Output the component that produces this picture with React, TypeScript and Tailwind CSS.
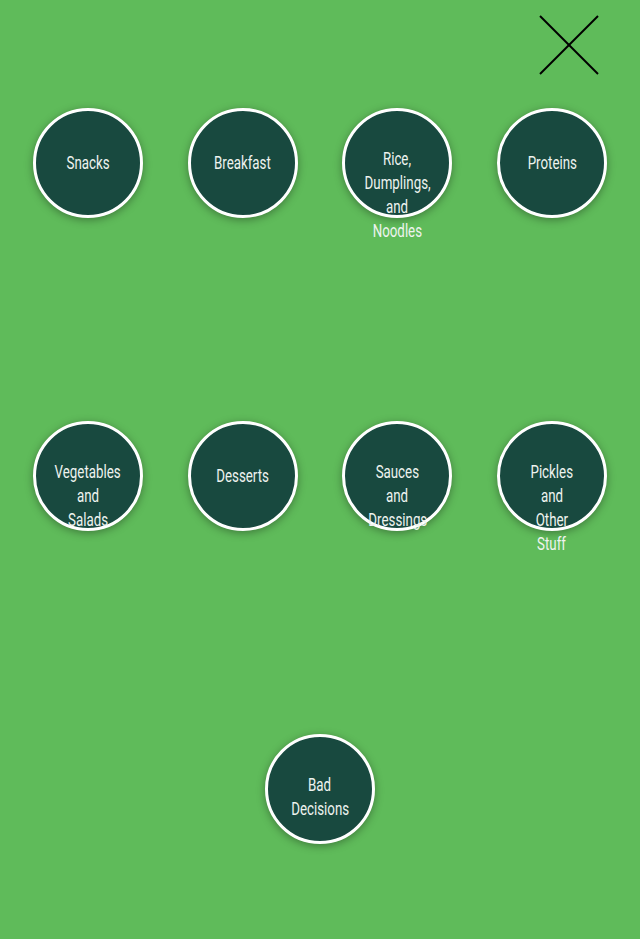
import React from "react";

const items: string[][] = [
  ["Snacks"],
  ["Breakfast"],
  ["Rice,", "Dumplings,", "and", "Noodles"],
  ["Proteins"],
  ["Vegetables", "and", "Salads"],
  ["Desserts"],
  ["Sauces", "and", "Dressings"],
  ["Pickles", "and", "Other", "Stuff"],
];

function Circle({ lines }: { lines: string[] }) {
  return (
    <div className="w-[110px] h-[110px] rounded-full border-[3px] border-white bg-[#18493f] shadow-[0_2px_8px_rgba(0,0,0,0.35)] flex items-center justify-center">
      <div className="h-[32px] w-full flex flex-col items-center [justify-content:safe_center] overflow-visible">
        {lines.map((l, i) => (
          <div
            key={i}
            className="whitespace-nowrap text-[18px] leading-[24px] text-[#eef3ef] [font-family:Roboto,sans-serif] scale-x-[0.74]"
          >
            {l}
          </div>
        ))}
      </div>
    </div>
  );
}

export default function App() {
  return (
    <div className="min-h-[939px] w-full bg-[#5fbb5a]">
      <div className="h-[108px] flex justify-end pr-[41px] pt-[15px]">
        <svg width="60" height="61" viewBox="0 0 60 61">
          <line x1="1" y1="1" x2="59" y2="59" stroke="#000" strokeWidth="2" />
          <line x1="59" y1="1" x2="1" y2="59" stroke="#000" strokeWidth="2" />
        </svg>
      </div>
      <div className="px-[10.67px] grid grid-cols-4 gap-y-[203px]">
        {items.map((it, i) => (
          <div key={i} className="flex justify-center">
            <Circle lines={it} />
          </div>
        ))}
      </div>
      <div className="mt-[203px] flex justify-center">
        <Circle lines={["Bad", "Decisions"]} />
      </div>
    </div>
  );
}
